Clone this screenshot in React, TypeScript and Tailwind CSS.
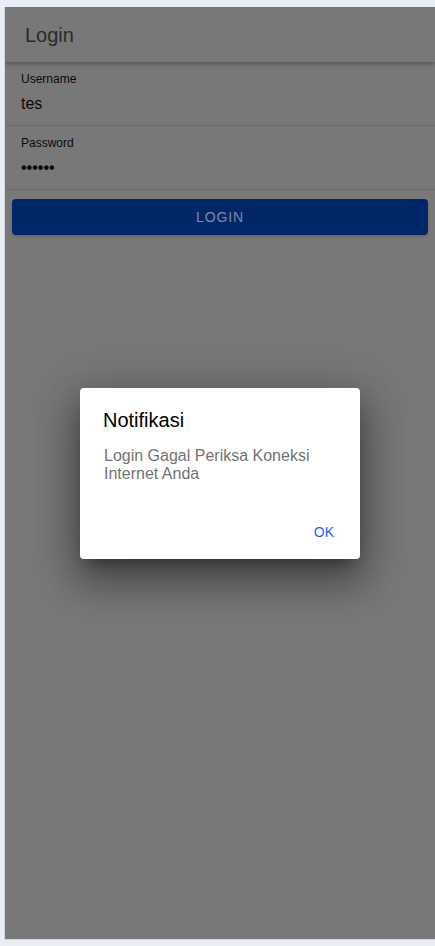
export default function App() {
  return (
    <div className="min-h-screen bg-[#e9eef6] pt-[7px] pl-[4px] pb-[6px] font-['Liberation_Sans',Arial,sans-serif]">
      <div className="relative h-[933px] border-l border-b border-[#d3d7dd] bg-[#787878] overflow-hidden">
        <header className="relative z-10 h-[55px] flex items-center px-[20px] shadow-[0_2px_4px_rgba(0,0,0,0.28)]">
          <h1 className="text-[20px] leading-[24px] text-[#2a2a2a]">Login</h1>
        </header>

        <div className="px-[16px] pt-[10px] pb-[11px] border-b border-[#6b6b6b]">
          <div className="text-[12px] leading-[14px] text-[#0a0a0a]">Username</div>
          <div className="mt-[8px] text-[16px] leading-[20px] text-[#0a0a0a]">tes</div>
        </div>
        <div className="px-[16px] pt-[10px] pb-[11px] border-b border-[#6b6b6b]">
          <div className="text-[12px] leading-[14px] text-[#0a0a0a]">Password</div>
          <div className="mt-[8px] text-[16px] leading-[20px] font-bold text-[#0a0a0a]">••••••</div>
        </div>

        <div className="px-[7px] pt-[9px]">
          <button className="w-full h-[36px] rounded-[4px] bg-[#002868] text-[14px] tracking-[0.06em] text-[#7c89a3] shadow-[0_2px_2px_rgba(0,0,0,0.12)]">
            LOGIN
          </button>
        </div>

        <div className="absolute inset-0 z-20 flex items-center justify-center">
          <div className="w-[280px] rounded-[4px] bg-white shadow-[0_11px_15px_-7px_rgba(0,0,0,0.35),0_24px_38px_3px_rgba(0,0,0,0.26),0_9px_46px_8px_rgba(0,0,0,0.22)]">
            <div className="pt-[20px] px-[23px] pb-[15px]">
              <h2 className="text-[20px] leading-[24px] text-black">Notifikasi</h2>
            </div>
            <div className="px-[24px] pb-[24px] text-[16px] leading-[18px] text-[#737373]">
              Login Gagal Periksa Koneksi Internet Anda
            </div>
            <div className="flex justify-end pr-[8px] pb-[8px]">
              <button className="mr-[8px] h-[44px] px-[10px] pt-[7px] text-[14px] leading-[16px] text-[#1d63ed]">
                OK
              </button>
            </div>
          </div>
        </div>
      </div>
    </div>
  );
}
